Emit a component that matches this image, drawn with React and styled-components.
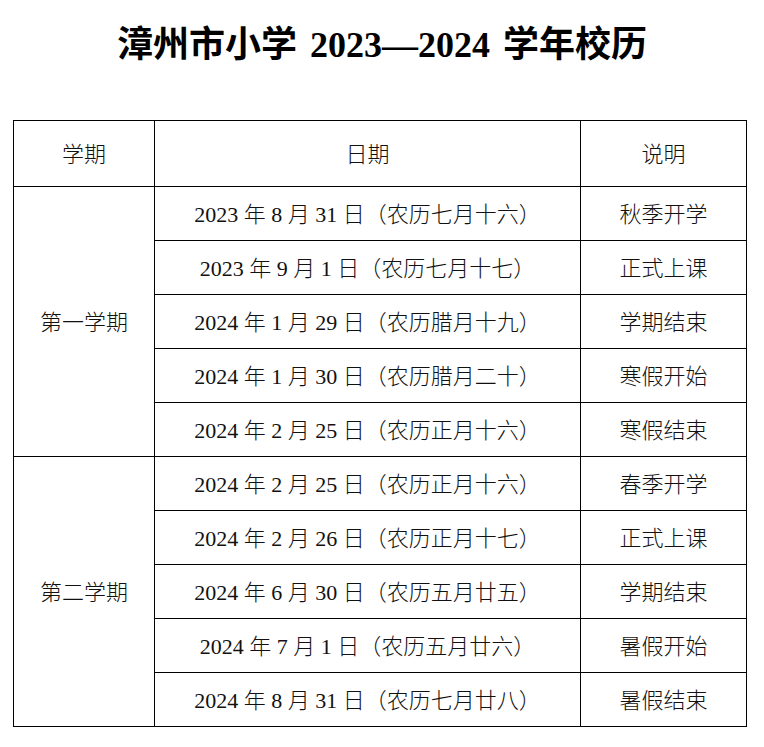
import React from 'react';
import styled, { createGlobalStyle } from 'styled-components';

const GlobalStyle = createGlobalStyle`
  html, body {
    margin: 0;
    padding: 0;
    background: #fff;
  }
  body {
    font-family: "Liberation Serif", "Noto Sans CJK SC", serif;
    color: #000;
  }
`;

const Page = styled.div`
  width: 764px;
  padding-top: 27px;
`;

const Title = styled.h1`
  margin: 0;
  height: 36px;
  line-height: 36px;
  font-size: 36px;
  font-weight: 700;
  text-align: center;
  word-spacing: 4px;
`;

const Table = styled.table`
  margin: 57px 0 0 13px;
  width: 733px;
  border-collapse: collapse;
  table-layout: fixed;
`;

const Cell = styled.td`
  border: 1px solid #000;
  height: ${(p) => (p.$head ? '61px' : '49px')};
  padding: 0 0 4px;
  text-align: center;
  vertical-align: middle;
  font-size: 22px;
  font-weight: 300;
  white-space: nowrap;
  color: #111;
`;

const HeadCell = styled(Cell).attrs({ as: 'th', $head: true })`
  font-weight: 300;
`;

const semesters = [
  {
    name: '第一学期',
    rows: [
      ['2023 年 8 月 31 日（农历七月十六）', '秋季开学'],
      ['2023 年 9 月 1 日（农历七月十七）', '正式上课'],
      ['2024 年 1 月 29 日（农历腊月十九）', '学期结束'],
      ['2024 年 1 月 30 日（农历腊月二十）', '寒假开始'],
      ['2024 年 2 月 25 日（农历正月十六）', '寒假结束'],
    ],
  },
  {
    name: '第二学期',
    rows: [
      ['2024 年 2 月 25 日（农历正月十六）', '春季开学'],
      ['2024 年 2 月 26 日（农历正月十七）', '正式上课'],
      ['2024 年 6 月 30 日（农历五月廿五）', '学期结束'],
      ['2024 年 7 月 1 日（农历五月廿六）', '暑假开始'],
      ['2024 年 8 月 31 日（农历七月廿八）', '暑假结束'],
    ],
  },
];

const App = () => {
  return (
    <Page>
      <GlobalStyle />
      <Title>漳州市小学 2023—2024 学年校历</Title>
      <Table>
        <colgroup>
          <col style={{ width: '141px' }} />
          <col style={{ width: '426px' }} />
          <col style={{ width: '166px' }} />
        </colgroup>
        <thead>
          <tr>
            <HeadCell>学期</HeadCell>
            <HeadCell>日期</HeadCell>
            <HeadCell>说明</HeadCell>
          </tr>
        </thead>
        <tbody>
          {semesters.map((sem) =>
            sem.rows.map(([date, note], i) => (
              <tr key={sem.name + i}>
                {i === 0 && <Cell rowSpan={sem.rows.length}>{sem.name}</Cell>}
                <Cell>{date}</Cell>
                <Cell>{note}</Cell>
              </tr>
            ))
          )}
        </tbody>
      </Table>
    </Page>
  );
};

export default App;
